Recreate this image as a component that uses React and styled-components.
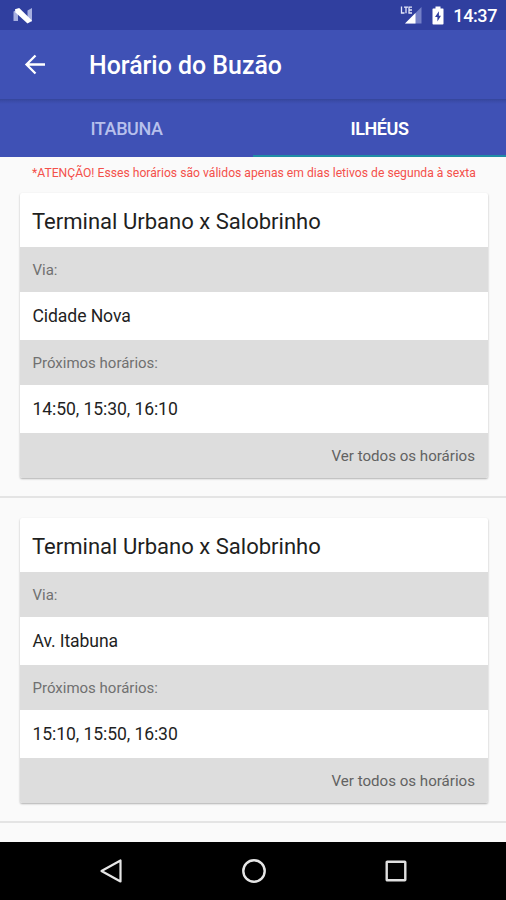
import React from "react";
import styled, { createGlobalStyle } from "styled-components";

const GlobalStyle = createGlobalStyle`
  * { box-sizing: border-box; }
  body { margin: 0; font-family: Roboto, "Noto Sans", sans-serif; background: #fafafa; }
`;

const Screen = styled.div`
  width: 506px;
  height: 900px;
  display: flex;
  flex-direction: column;
  overflow: hidden;
  background: #fafafa;
`;

const StatusBar = styled.div`
  flex: none;
  height: 30px;
  padding: 1px 9px 0 12px;
  display: flex;
  align-items: center;
  background: #303f9f;
  color: #fff;
`;

const StatusIcons = styled.div`
  margin-left: auto;
  display: flex;
  align-items: center;
`;

const SignalIcon = styled.svg`
  margin-right: 10px;
`;

const Clock = styled.span`
  margin-left: 9px;
  font-size: 18px;
  font-weight: 500;
  letter-spacing: -0.4px;
  line-height: 28px;
  white-space: nowrap;
`;

const Toolbar = styled.header`
  flex: none;
  height: 69px;
  padding: 1px 22px 0;
  display: flex;
  align-items: center;
  gap: 41px;
  background: #3f51b5;
  color: #fff;
`;

const Heading = styled.h1`
  margin: 0;
  padding-top: 2px;
  font-size: 24.9px;
  font-weight: 500;
  line-height: 32px;
  white-space: nowrap;
`;

const IconButton = styled.button`
  display: flex;
  padding: 0;
  border: 0;
  background: none;
  color: inherit;
`;

const Tabs = styled.nav`
  flex: none;
  height: 58px;
  display: flex;
  background: linear-gradient(#35469b, #3a4ba8 2px, #3f51b5 5px);
`;

const Tab = styled.button`
  flex: 1;
  padding: 4px 0 0;
  border: 0;
  border-bottom: 2px solid ${(p) => (p.$active ? "#208da6" : "#3f51b5")};
  background: none;
  color: ${(p) => (p.$active ? "#fff" : "#b7c0ec")};
  font: ${(p) => (p.$active ? 600 : 500)} 18px/24px Roboto, sans-serif;
  letter-spacing: -0.4px;
`;

const Content = styled.main`
  flex: 1;
  min-height: 0;
  overflow: hidden;
`;

const Notice = styled.p`
  margin: 0;
  height: 36px;
  padding: 7px 0 0 32px;
  color: #f4514b;
  font-size: 12.16px;
  line-height: 18px;
  white-space: nowrap;
`;

const Entry = styled.section`
  height: 325px;
  padding: 0 18px 0 20px;
`;

const Card = styled.article`
  border-radius: 2px;
  overflow: hidden;
  background: #fff;
  box-shadow: 0 1px 2px rgba(0, 0, 0, 0.3);
`;

const Title = styled.h2`
  margin: 0;
  height: 54px;
  padding: 2px 12px 0;
  color: #1f1f1f;
  font-size: 22.05px;
  font-weight: 400;
  line-height: 54px;
  white-space: nowrap;
`;

const Label = styled.div`
  height: 45px;
  padding: 1px 12.5px 0;
  background: #ddd;
  color: #707070;
  font-size: 15px;
  line-height: 45px;
`;

const Value = styled.div`
  height: 48px;
  padding: 0 12.5px;
  color: #1f1f1f;
  font-size: 17.6px;
  letter-spacing: -0.1px;
  line-height: 49px;
`;

const Action = styled.button`
  display: block;
  width: 100%;
  height: 45px;
  padding: 1px 13px 0;
  border: 0;
  background: #ddd;
  color: #626262;
  font: 400 15.1px/44px Roboto, sans-serif;
  text-align: right;
`;

const Divider = styled.hr`
  height: 2px;
  margin: 18px -18px 0 -20px;
  border: 0;
  background: #e4e4e4;
`;

const NavBar = styled.footer`
  flex: none;
  height: 58px;
  padding-left: 1px;
  display: flex;
  justify-content: center;
  align-items: center;
  gap: 114.5px;
  background: #000;
`;

const routes = [
  { name: "Terminal Urbano x Salobrinho", via: "Cidade Nova", times: "14:50, 15:30, 16:10" },
  { name: "Terminal Urbano x Salobrinho", via: "Av. Itabuna", times: "15:10, 15:50, 16:30" },
];

function Route({ name, via, times }) {
  return (
    <Entry>
      <Card>
        <Title>{name}</Title>
        <Label>Via:</Label>
        <Value>{via}</Value>
        <Label>Próximos horários:</Label>
        <Value>{times}</Value>
        <Action>Ver todos os horários</Action>
      </Card>
      <Divider />
    </Entry>
  );
}

export default function App() {
  return (
    <Screen>
      <GlobalStyle />
      <StatusBar>
        <svg width="22" height="18" viewBox="0 0 22 18">
          <path d="M1.5 4.500 6 2v12L1.500 14zM15.500 3.500 20 1v13.500L15.500 16z" fill="#a6afe0" />
          <path d="M3 2.300 7.200 1 20 13.500 15.500 16.500 3.500 5.500z" fill="#fff" />
        </svg>
        <StatusIcons>
          <SignalIcon width="22" height="20" viewBox="0 0 22 20">
            <path d="M21.500 1v16.500H5z" fill="#7480c7" />
            <path d="M15.500 7v10.500H5z" fill="#fff" />
            <path d="M1.500 .5v6.500H4.500M4 1.200h4M6 1.200v6M12 1.200H9v5.800h3M9 4h3" fill="none" stroke="#e4e7fa" strokeWidth="1.300" />
          </SignalIcon>
          <svg width="12" height="20" viewBox="0 0 12 20">
            <path d="M3.500 .5h5v2H11q.5 0 .5.8v14.400q0 .8-.8.8H1.300q-.8 0-.8-.8V3.300Q.5 2.500 1.300 2.500h2.200z" fill="#fff" />
            <path d="M6.900 5.300 3 11h2.400V15.500L9 9.800H6.900z" fill="#303f9f" />
          </svg>
          <Clock>14:37</Clock>
        </StatusIcons>
      </StatusBar>
      <Toolbar>
        <IconButton aria-label="Voltar">
          <svg width="26" height="26" viewBox="0 0 26 26" fill="none" stroke="#fff" strokeWidth="2.300">
            <path d="M23 12.500H5M13.500 3.500 4.500 12.500l9 9" />
          </svg>
        </IconButton>
        <Heading>Horário do Buzão</Heading>
      </Toolbar>
      <Tabs>
        <Tab>ITABUNA</Tab>
        <Tab $active>ILHÉUS</Tab>
      </Tabs>
      <Content>
        <Notice>*ATENÇÃO! Esses horários são válidos apenas em dias letivos de segunda à sexta</Notice>
        {routes.map((r) => (
          <Route key={r.via} {...r} />
        ))}
      </Content>
      <NavBar>
        <svg width="28" height="28" viewBox="0 0 28 28" fill="none" stroke="#e6e6e6" strokeWidth="2.200" strokeLinejoin="round">
          <path d="M23.500 3.500v21L4.500 14z" />
        </svg>
        <svg width="28" height="28" viewBox="0 0 28 28" fill="none" stroke="#e6e6e6" strokeWidth="2.400">
          <circle cx="14" cy="14" r="10.700" />
        </svg>
        <svg width="28" height="28" viewBox="0 0 28 28" fill="none" stroke="#e0e0e0" strokeWidth="2.400">
          <rect x="4.700" y="4.700" width="18.600" height="18.600" rx=".5" />
        </svg>
      </NavBar>
    </Screen>
  );
}
